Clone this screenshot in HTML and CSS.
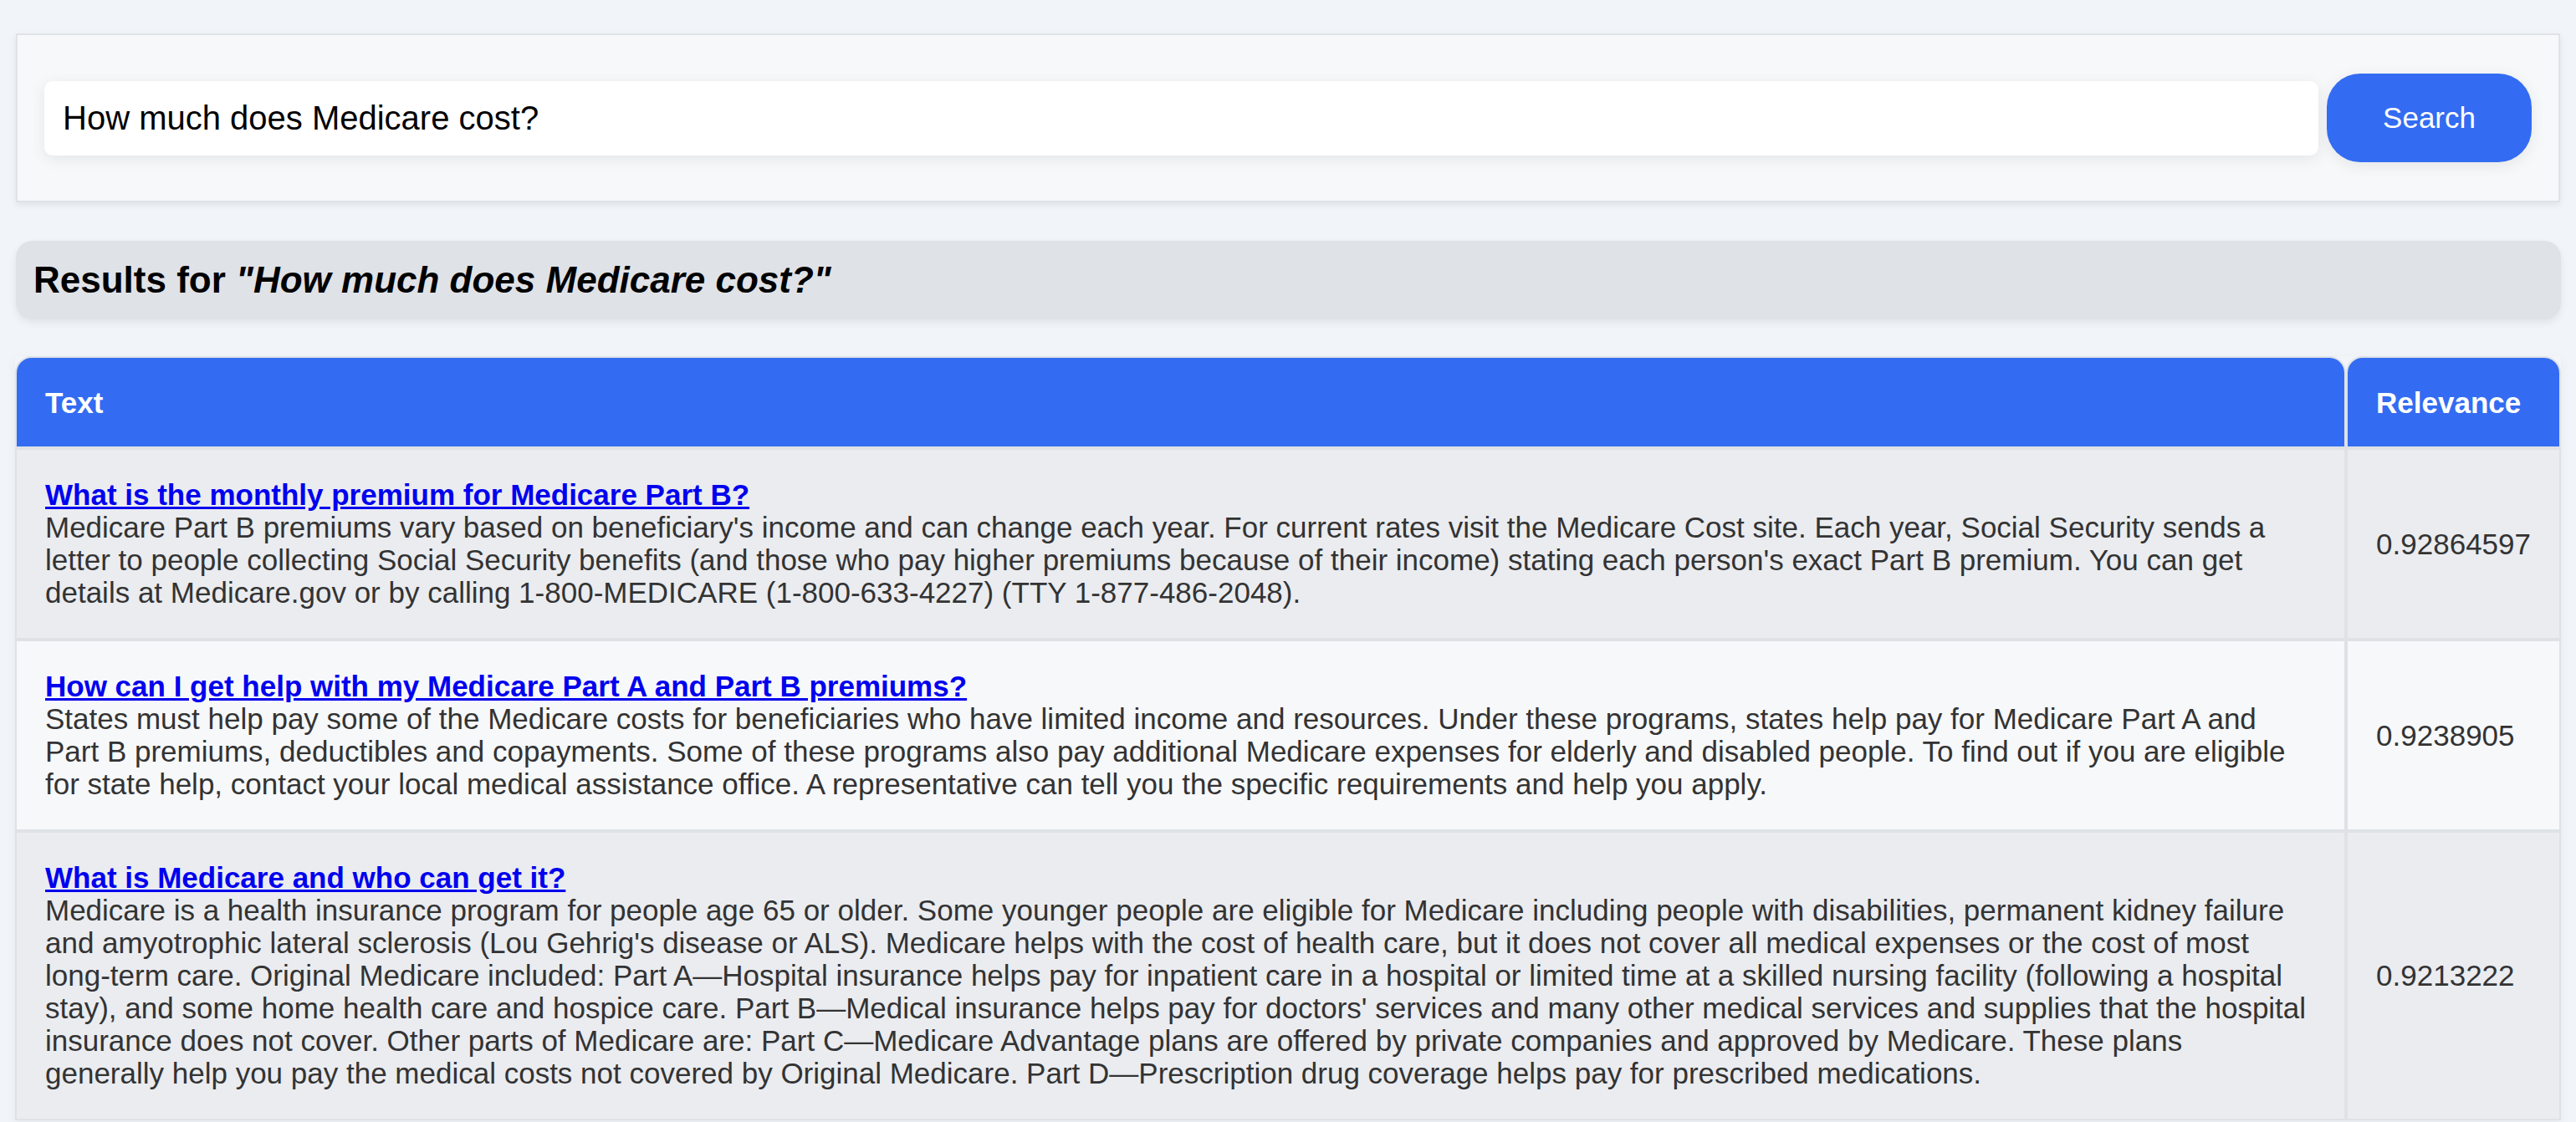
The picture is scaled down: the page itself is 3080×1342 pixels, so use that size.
FILE: index.html
```html
<!DOCTYPE html>
<html lang="en">
<head>
<meta charset="utf-8">
<title>Medicare Search</title>
<link rel="stylesheet" href="styles.css">
</head>
<body>
<div class="page">
  <form class="search-panel" onsubmit="return false">
    <input class="search-input" type="text" value="How much does Medicare cost?">
    <button class="search-btn" type="submit">Search</button>
  </form>

  <div class="results-header">
    <h2 class="results-title">Results for <em>"How much does Medicare cost?"</em></h2>
  </div>

  <table class="results">
    <thead>
      <tr>
        <th class="col-text">Text</th>
        <th class="col-rel">Relevance</th>
      </tr>
    </thead>
    <tbody>
      <tr class="row-odd">
        <td class="cell-text"><a class="q-link" href="#"><b>What is the monthly premium for Medicare Part B?</b></a><br>Medicare Part B premiums vary based on beneficiary's income and can change each year. For current rates visit the Medicare Cost site. Each year, Social Security sends a letter to people collecting Social Security benefits (and those who pay higher premiums because of their income) stating each person's exact Part B premium. You can get details at Medicare.gov or by calling 1-800-MEDICARE (1-800-633-4227) (TTY 1-877-486-2048).</td>
        <td class="cell-rel">0.92864597</td>
      </tr>
      <tr class="row-even">
        <td class="cell-text"><a class="q-link" href="#"><b>How can I get help with my Medicare Part A and Part B premiums?</b></a><br>States must help pay some of the Medicare costs for beneficiaries who have limited income and resources. Under these programs, states help pay for Medicare Part A and Part B premiums, deductibles and copayments. Some of these programs also pay additional Medicare expenses for elderly and disabled people. To find out if you are eligible for state help, contact your local medical assistance office. A representative can tell you the specific requirements and help you apply.</td>
        <td class="cell-rel">0.9238905</td>
      </tr>
      <tr class="row-odd">
        <td class="cell-text"><a class="q-link" href="#"><b>What is Medicare and who can get it?</b></a><br>Medicare is a health insurance program for people age 65 or older. Some younger people are eligible for Medicare including people with disabilities, permanent kidney failure and amyotrophic lateral sclerosis (Lou Gehrig's disease or ALS). Medicare helps with the cost of health care, but it does not cover all medical expenses or the cost of most long-term care. Original Medicare included: Part A—Hospital insurance helps pay for inpatient care in a hospital or limited time at a skilled nursing facility (following a hospital stay), and some home health care and hospice care. Part B—Medical insurance helps pay for doctors' services and many other medical services and supplies that the hospital insurance does not cover. Other parts of Medicare are: Part C—Medicare Advantage plans are offered by private companies and approved by Medicare. These plans<br>generally help you pay the medical costs not covered by Original Medicare. Part D—Prescription drug coverage helps pay for prescribed medications.</td>
        <td class="cell-rel">0.9213222</td>
      </tr>
    </tbody>
  </table>
</div>
</body>
</html>
```

FILE: styles.css
```css
html, body {
  margin: 0;
  padding: 0;
  background: #f1f4f8;
  font-family: "Liberation Sans", Arial, Helvetica, sans-serif;
  color: #000;
}

.page {
  padding: 40px 18px 40px 18px;
}

.search-panel {
  display: flex;
  align-items: center;
  gap: 10px;
  margin: 0 1px 46px 1px;
  padding: 46px 32px;
  background: #f7f8fa;
  border: 2px solid #dfe3e8;
  box-shadow: 0 3px 8px rgba(0, 0, 0, 0.08);
}

.search-input {
  flex: 1;
  height: 89px;
  box-sizing: border-box;
  padding: 0 22px;
  border: none;
  border-radius: 10px;
  background: #fff;
  font-family: "Liberation Sans", Arial, Helvetica, sans-serif;
  font-size: 40px;
  color: #000;
  box-shadow: 0 4px 18px rgba(0, 0, 0, 0.08);
  outline: none;
}

.search-btn {
  height: 106px;
  padding: 0 67px;
  border: none;
  border-radius: 40px;
  background: #336cf2;
  color: #fff;
  font-family: "Liberation Sans", Arial, Helvetica, sans-serif;
  font-size: 35px;
  cursor: pointer;
  box-shadow: 0 4px 18px rgba(0, 0, 0, 0.08);
}

.results-header {
  margin: 0 0 44px 1px;
  padding: 22px 21px;
  background: #dfe2e7;
  border-radius: 20px;
  box-shadow: 0 4px 10px rgba(0, 0, 0, 0.07);
}

.results-title {
  margin: 0;
  font-size: 44px;
  font-weight: bold;
  line-height: normal;
  color: #000;
}

.results {
  width: 100%;
  border-collapse: separate;
  border-spacing: 0;
  font-size: 35px;
  line-height: 39px;
  box-shadow: 0 4px 12px rgba(0, 0, 0, 0.05);
}

.results th,
.results td {
  border: 2px solid #dee2e6;
}

.results th {
  background: #336cf2;
  color: #fff;
  font-weight: bold;
  text-align: left;
  padding: 34px 34px 33px 34px;
  border-radius: 20px 20px 0 0;
}

.results td {
  padding: 34px 34px 35px 34px;
  vertical-align: middle;
  color: #333;
}

.col-rel,
.cell-rel {
  white-space: nowrap;
}

.row-odd td {
  background: #eaecf0;
}

.row-even td {
  background: #f7f8fa;
}

.q-link {
  color: #0000ee;
  text-decoration: underline;
}
```
